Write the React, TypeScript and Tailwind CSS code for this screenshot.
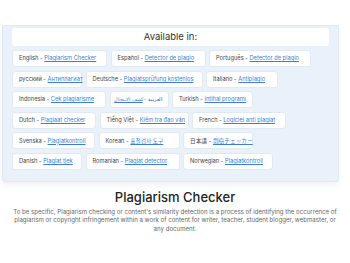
const rows: { lang: string; link: string; w: string; rtl?: boolean }[][] = [
  [
    { lang: "English", link: "Plagiarism Checker", w: "w-[95px]" },
    { lang: "Español", link: "Detector de plagio", w: "w-[95px]" },
    { lang: "Português", link: "Detector de plagio", w: "w-[102px]" },
  ],
  [
    { lang: "русский", link: "Антиплагиат", w: "w-[70px]" },
    { lang: "Deutsche", link: "Plagiatsprüfung kostenlos", w: "w-[117px]" },
    { lang: "Italiano", link: "Antiplagio", w: "w-[72px]" },
  ],
  [
    { lang: "Indonesia", link: "Cek plagiarisme", w: "w-[94px]" },
    { lang: "العربية", link: "كشف الانتحال", w: "w-[59px]", rtl: true },
    { lang: "Turkish", link: "intihal programı", w: "w-[81px]" },
  ],
  [
    { lang: "Dutch", link: "Plagiaat checker", w: "w-[84px]" },
    { lang: "Tiếng Việt", link: "Kiểm tra đạo văn", w: "w-[89px]" },
    { lang: "French", link: "Logiciel anti plagiat", w: "w-[94px]" },
  ],
  [
    { lang: "Svenska", link: "Plagiatkontroll", w: "w-[83px]" },
    { lang: "Korean", link: "표절검사 도구", w: "w-[81px]" },
    { lang: "日本語", link: "剽窃チェッカー", w: "w-[70px]" },
  ],
  [
    { lang: "Danish", link: "Plagiat tjek", w: "w-[70px]" },
    { lang: "Romanian", link: "Plagiat detector", w: "w-[94px]" },
    { lang: "Norwegian", link: "Plagiatkontroll", w: "w-[90px]" },
  ],
];

const font = {
  fontFamily:
    'Inter, "Noto Sans", "Noto Sans CJK JP", "Noto Sans CJK KR", sans-serif',
};

function Chip({ lang, link, w, rtl }: { lang: string; link: string; w: string; rtl?: boolean }) {
  return (
    <div
      dir={rtl ? "rtl" : "ltr"}
      className={`${w} flex h-[17px] shrink-0 items-center whitespace-nowrap rounded-[3px] border border-[#e3e9f1] bg-white px-[6px] text-[#444] ${rtl ? "text-[4.8px]" : "text-[5.7px]"}`}
    >
      <span>{lang} -&nbsp;</span>
      <a href="#" className="text-[#3d7fd6] underline">
        {link}
      </a>
    </div>
  );
}

export default function App() {
  return (
    <div className="h-[263px] w-[350px] overflow-hidden bg-white" style={font}>
      <div className="h-[25px]" />
      <div className="ml-[2px] w-[337px] rounded-b-[3px] border border-[#dfe8f3] bg-[#e9f1fa] px-[9px] pt-[2px] pb-[11px] shadow-[0_4px_6px_rgba(0,0,0,0.05)]">
        <div className="flex h-[18px] items-center justify-center rounded-[3px] bg-white text-[9.5px] text-[#333]">
          Available in:
        </div>
        <div className="mt-[4px] flex flex-col gap-[3.6px]">
          {rows.map((row, i) => (
            <div key={i} className="flex gap-[3.5px]">
              {row.map((c) => (
                <Chip key={c.lang} {...c} />
              ))}
            </div>
          ))}
        </div>
      </div>
      <h1 className="mt-[5px] text-center text-[13px] font-medium leading-[20px] text-[#222]">
        Plagiarism Checker
      </h1>
      <p className="mt-[1px] text-center text-[6.1px] leading-[8.3px] text-[#666]">
        To be specific, Plagiarism checking or content's similarity detection is a process of identifying the occurrence of
        <br />
        plagiarism or copyright infringement within a work of content for writer, teacher, student blogger, webmaster, or
        <br />
        any document.
      </p>
    </div>
  );
}
